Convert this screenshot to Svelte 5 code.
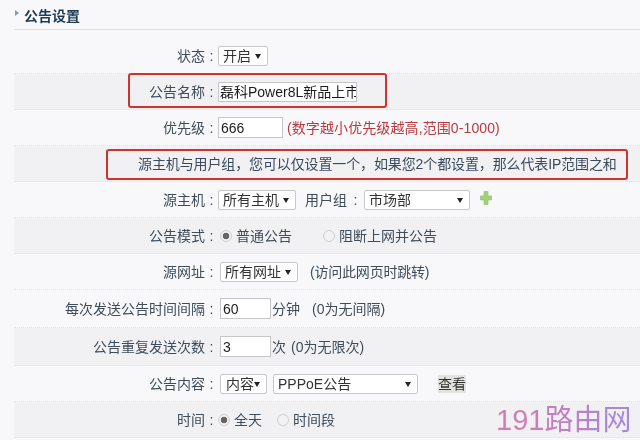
<script>
  const interval = "60";
  const repeat = "3";
</script>

<div class="page">
  <div class="head">
    <span class="arrow"></span>
    <h2>公告设置</h2>
  </div>

  <div class="rows">
    <div class="row">
      <span class="label">状态</span><span class="colon">:</span>
      <div class="ctl"><span class="select" style="width:50px">开启</span></div>
    </div>
    <div class="row alt">
      <span class="label">公告名称</span><span class="colon">:</span>
      <div class="ctl"><input class="name" value="磊科Power8L新品上市" /></div>
      <span class="mark mark-name"></span>
    </div>
    <div class="row">
      <span class="label">优先级</span><span class="colon">:</span>
      <div class="ctl">
        <input class="prio" value="666" />
        <span class="red">(数字越小优先级越高,范围0-1000)</span>
      </div>
    </div>
    <div class="row alt note">
      <span class="note-text">源主机与用户组，您可以仅设置一个，如果您2个都设置，那么代表IP范围之和</span>
      <span class="mark mark-note"></span>
    </div>
    <div class="row">
      <span class="label">源主机</span><span class="colon">:</span>
      <div class="ctl">
        <span class="select" style="width:78px">所有主机</span>
        <span class="sub">用户组</span><span class="colon sub-colon">:</span>
        <span class="select" style="width:106px">市场部</span>
        <svg class="plus" viewBox="0 0 12 14" width="12" height="14">
          <path d="M4 0.5h4v4.5h3.5v4H8v4.5H4V9H0.5V5H4z" fill="#a4cf7c" stroke="#8fbc68" stroke-width="0.6" />
        </svg>
      </div>
    </div>
    <div class="row alt">
      <span class="label">公告模式</span><span class="colon">:</span>
      <div class="ctl shift">
        <span class="radio on"></span><span class="opt">普通公告</span>
        <span class="radio second"></span><span class="opt">阻断上网并公告</span>
      </div>
    </div>
    <div class="row">
      <span class="label">源网址</span><span class="colon">:</span>
      <div class="ctl shift">
        <span class="select" style="width:78px">所有网址</span>
        <span class="hint url-hint">(访问此网页时跳转)</span>
      </div>
    </div>
    <div class="row tall">
      <span class="label">每次发送公告时间间隔</span><span class="colon">:</span>
      <div class="ctl shift">
        <input class="short" value={interval} /><span class="unit">分钟</span>
        <span class="hint wide">(0为无间隔)</span>
      </div>
    </div>
    <div class="row alt tall">
      <span class="label">公告重复发送次数</span><span class="colon">:</span>
      <div class="ctl shift">
        <input class="short" value={repeat} /><span class="unit">次</span>
        <span class="hint">(0为无限次)</span>
      </div>
    </div>
    <div class="row">
      <span class="label">公告内容</span><span class="colon">:</span>
      <div class="ctl shift">
        <span class="select pad" style="width:47px">内容</span>
        <span class="select latin" style="width:145px">PPPoE公告</span>
        <button>查看</button>
      </div>
    </div>
    <div class="row alt">
      <span class="label">时间</span><span class="colon">:</span>
      <div class="ctl">
        <span class="radio on"></span><span class="opt">全天</span>
        <span class="radio third"></span><span class="opt">时间段</span>
      </div>
    </div>
  </div>

  <span class="brand">191路由网</span>
</div>

<style>
  :global(body) {
    margin: 0;
    background: #f8f8fa;
  }
  .page {
    position: relative;
    width: 640px;
    height: 440px;
    overflow: hidden;
    box-sizing: border-box;
    padding-left: 14px;
    background: #f8f8fa;
    color: #3f4c5a;
    font: 14px/20px "Liberation Sans", "Noto Sans CJK SC", sans-serif;
    filter: blur(0.35px);
  }
  .head {
    display: flex;
    align-items: center;
    gap: 5px;
    height: 29px;
    padding-left: 1px;
    border-bottom: 1px solid #dcdddd;
  }
  .arrow {
    border-left: 4px solid #8d98a3;
    border-top: 3.5px solid transparent;
    border-bottom: 3.5px solid transparent;
    margin-top: -3px;
  }
  h2 {
    margin: 0 0 -2px;
    font-size: 14px;
    font-weight: 700;
    color: #1d3a57;
  }
  .rows {
    padding-top: 8px;
  }
  .row {
    position: relative;
    display: flex;
    align-items: center;
    height: 36px;
    border-bottom: 1px dotted #e2e2e4;
    box-sizing: border-box;
  }
  .tall {
    height: 38px;
  }
  .alt {
    background: #f1f1f3;
  }
  .label {
    width: 191px;
    text-align: right;
    flex: none;
    white-space: nowrap;
  }
  .colon {
    width: 13px;
    flex: none;
    text-align: center;
  }
  .ctl {
    display: flex;
    align-items: center;
    white-space: nowrap;
  }
  .shift {
    margin-left: 2px;
  }
  .select {
    position: relative;
    display: block;
    box-sizing: border-box;
    height: 20px;
    line-height: 18px;
    padding-left: 4px;
    background: #fff;
    border: 1px solid #c8c8c8;
    border-radius: 2px;
    color: #333;
    flex: none;
  }
  .pad {
    padding-left: 5px;
  }
  .select::after {
    content: "";
    position: absolute;
    right: 6px;
    top: 7px;
    border-top: 5px solid #222;
    border-left: 3px solid transparent;
    border-right: 3px solid transparent;
  }
  .latin {
    margin-left: 6px;
  }
  input {
    box-sizing: border-box;
    height: 21px;
    padding: 0 2px;
    border: 1px solid #c4c6c8;
    background: #fff;
    color: #1c1c1c;
    font: inherit;
    outline: none;
  }
  .name {
    width: 139px;
    padding: 0 0 0 1px;
    height: 20px;
  }
  .prio {
    width: 65px;
  }
  .short {
    width: 51px;
  }
  .unit {
    margin-left: 1px;
  }
  .red {
    margin-left: 4px;
    color: #b73a3f;
    letter-spacing: 0.1px;
  }
  .note {
    padding-left: 124px;
  }
  .note-text {
    white-space: nowrap;
    color: #3a4a5c;
    letter-spacing: -0.12px;
  }
  .sub {
    margin-left: 9px;
  }
  .sub-colon {
    width: 17px;
  }
  .plus {
    margin-left: 10px;
    margin-top: -3px;
  }
  .radio {
    width: 10px;
    height: 10px;
    border: 1px solid #cfcfd2;
    border-radius: 50%;
    background: #f2f2f4;
    flex: none;
  }
  .radio.on {
    background: radial-gradient(circle, #666 0 3px, #f2f2f4 3.6px);
  }
  .opt {
    margin-left: 4px;
  }
  .second {
    margin-left: 31px;
  }
  .third {
    margin-left: 15px;
  }
  .hint {
    margin-left: 5px;
  }
  .wide {
    margin-left: 12px;
  }
  .url-hint {
    margin-left: 12px;
    letter-spacing: -0.2px;
  }
  button {
    margin-left: 20px;
    height: 18px;
    width: 28px;
    padding: 0;
    border: 0;
    background: #e2e2df;
    color: #333;
    font: inherit;
    line-height: 18px;
  }
  .mark {
    position: absolute;
    border: 2px solid #cc3430;
    border-radius: 3px;
    box-sizing: border-box;
    pointer-events: none;
  }
  .mark-name {
    left: 114px;
    top: -1px;
    width: 259px;
    height: 35px;
  }
  .mark-note {
    left: 92px;
    top: 3px;
    width: 522px;
    height: 31px;
  }
  .brand {
    position: absolute;
    left: 496px;
    top: 400px;
    font-size: 29px;
    line-height: 40px;
    white-space: nowrap;
    background: linear-gradient(90deg, #d77aa9, #bb80c9 60%, #a48bd8);
    -webkit-background-clip: text;
    background-clip: text;
    color: transparent;
  }
</style>
